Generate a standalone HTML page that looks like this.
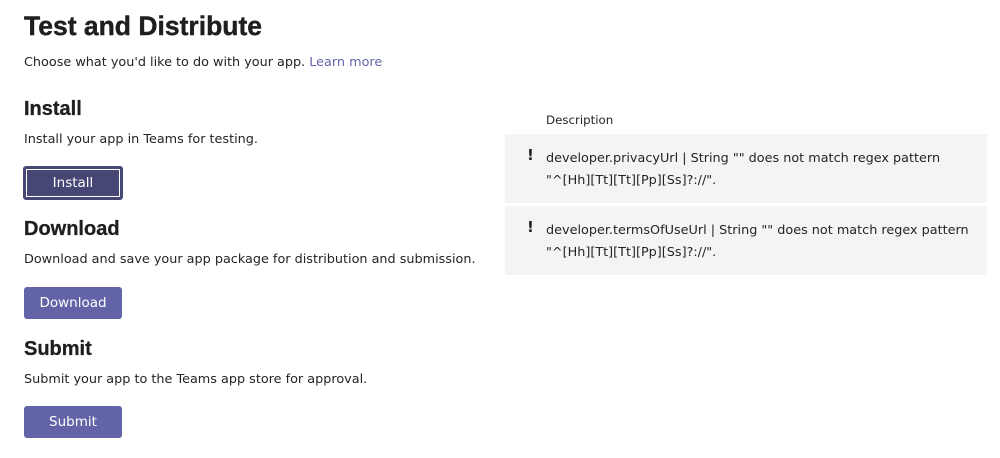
<!DOCTYPE html>
<html><head><style>
body{margin:0;background:#fff;width:1000px;height:458px;overflow:hidden;font-family:"DejaVu Sans","Liberation Sans",sans-serif;color:#252423;position:relative}
.a{position:absolute;white-space:nowrap}
h1,h2{margin:0;font-family:"Liberation Sans",sans-serif;font-weight:bold;position:absolute;color:#1f1f1f}
h1{font-size:26.5px;left:24px;top:11px;-webkit-text-stroke:0.4px #1f1f1f}
h2{font-size:20px;left:24px;-webkit-text-stroke:0.3px #1f1f1f}
.t{font-size:12.8px;left:24px}
.btn{position:absolute;left:24px;width:98px;height:32px;background:#6264a7;border-radius:3px;color:#fff;font-size:13.5px;text-align:center;line-height:32px}
.row{position:absolute;left:505px;width:482px;height:69px;background:#f5f4f3}
.row .m{position:absolute;left:41px;top:14px;font-size:12.8px;line-height:22px;color:#252423;white-space:nowrap}
.row .e{position:absolute;left:22px;top:12px;font-size:15px;font-weight:bold}
</style></head><body>
<h1>Test and Distribute</h1>
<div class="a t" style="top:55px">Choose what you'd like to do with your app. <span style="color:#6264a7">Learn more</span></div>
<h2 style="top:98px">Install</h2>
<div class="a t" style="top:132px">Install your app in Teams for testing.</div>
<div class="btn" style="top:166px;background:#464775;box-shadow:inset 0 0 0 2px #464775,inset 0 0 0 3px #fff;border:1px solid #464775;left:23px;height:32px;line-height:32px">Install</div>
<h2 style="top:218px">Download</h2>
<div class="a t" style="top:252px">Download and save your app package for distribution and submission.</div>
<div class="btn" style="top:287px">Download</div>
<h2 style="top:338px">Submit</h2>
<div class="a t" style="top:372px">Submit your app to the Teams app store for approval.</div>
<div class="btn" style="top:406px">Submit</div>
<div class="a" style="left:546px;top:113px;font-size:11.8px">Description</div>
<div class="row" style="top:134px"><span class="e">!</span><div class="m">developer.privacyUrl | String "" does not match regex pattern<br>"^[Hh][Tt][Tt][Pp][Ss]?://".</div></div>
<div class="row" style="top:206px"><span class="e">!</span><div class="m">developer.termsOfUseUrl | String "" does not match regex pattern<br>"^[Hh][Tt][Tt][Pp][Ss]?://".</div></div>
</body></html>
